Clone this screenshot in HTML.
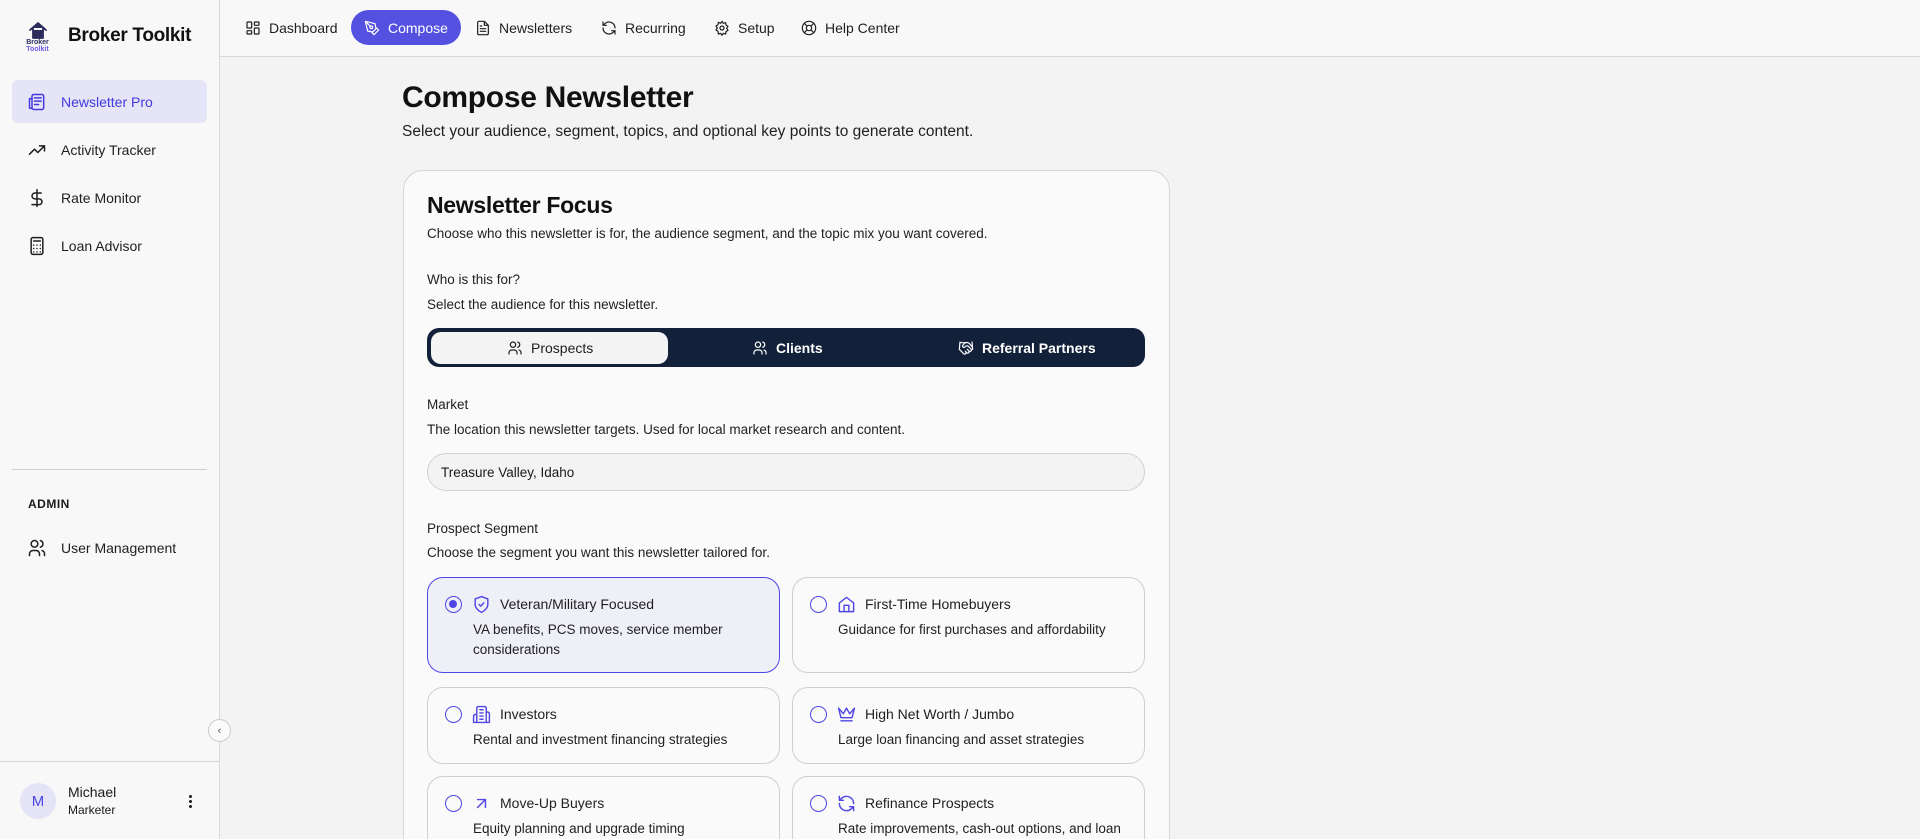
<!DOCTYPE html>
<html><head><meta charset="utf-8"><style>
*{box-sizing:border-box;margin:0;padding:0}
html{width:1920px;height:839px;overflow:hidden}
body{width:1920px;height:839px;overflow:hidden;background:#f3f3f3;font-family:"Liberation Sans",sans-serif;color:#1a1a1a;position:relative}
.abs{position:absolute}
svg{fill:none;stroke:currentColor;stroke-width:1.8;stroke-linecap:round;stroke-linejoin:round}
#side{left:0;top:0;width:220px;height:839px;background:#f8f8f8;border-right:1px solid #d9d9d9}
.nav{position:absolute;left:12px;width:195px;height:43px;border-radius:6px;display:flex;align-items:center;padding-left:15px;font-size:14px;color:#1f1f1f}
.nav svg{width:20px;height:20px;margin-right:14px}
.nav.act{background:#e5e5f7;color:#4338e0}
#top{left:220px;top:0;width:1700px;height:57px;border-bottom:1px solid #d9d9d9;background:#f8f8f8}
.tn{position:absolute;top:10px;height:35px;display:flex;align-items:center;font-size:14px;color:#1f1f1f}
.tn svg{width:16px;height:16px;margin-right:8px}
.tn.act{background:#5451e1;color:#fff;border-radius:18px;padding:0 13px}
#wrap{left:0;top:0;width:1920px;height:839px;overflow:hidden}
#card{left:403px;top:170px;width:767px;height:700px;background:#fafafa;border:1px solid #d6d6d6;border-radius:20px}
.lbl{position:absolute;left:427px;font-size:13.5px;color:#1f1f1f;white-space:nowrap}
.opt{position:absolute;width:353px;border:1px solid #cfcfcf;border-radius:16px;background:#fafafa}
.opt.sel{background:#eeeff7;border:1.5px solid #4f46e5}
.rad{position:absolute;left:17px;top:18px;width:17px;height:17px;border:1.5px solid #4f46e5;border-radius:50%}
.sel .rad::after{content:"";position:absolute;left:3px;top:3px;width:8px;height:8px;border-radius:50%;background:#4f46e5}
.opt svg{position:absolute;left:44px;top:17px;width:19px;height:19px;color:#4f46e5}
.ot{position:absolute;left:72px;top:18px;font-size:14px;color:#1f1f1f;white-space:nowrap}
.od{position:absolute;left:45px;top:42px;width:300px;font-size:13.5px;line-height:20px;color:#1f1f1f}
</style></head><body>
<div id="wrap" class="abs">
<div id="side" class="abs">
 <svg class="abs" style="left:27px;top:20px;width:22px;height:20px;stroke:#2a2d5c" viewBox="0 0 22 20"><path d="M3 10 11 3l8 7M6 8v10h10V8" fill="#2a2d5c"/></svg>
 <div class="abs" style="left:25px;top:39px;font-size:7px;font-weight:bold;color:#2a2d5c;line-height:7px;text-align:center;width:25px">Broker<br><span style="color:#6b5be6">Toolkit</span></div>
 <div class="abs" style="left:68px;top:25px;font-size:19px;font-weight:bold;color:#111;letter-spacing:-0.3px">Broker Toolkit</div>
 <div class="nav act" style="top:80px"><svg viewBox="0 0 24 24"><rect x="6" y="3" width="14" height="18" rx="2"/><path d="M6 8H3v11a2 2 0 0 0 3 0M9 7h8M9 11h8M9 15h5"/></svg>Newsletter Pro</div>
 <div class="nav" style="top:128px"><svg viewBox="0 0 24 24"><path d="M3 17l6-6 4 4 8-8M15 7h6v6"/></svg>Activity Tracker</div>
 <div class="nav" style="top:176px"><svg viewBox="0 0 24 24"><path d="M12 2v20M17 6H9.5a3.5 3.5 0 0 0 0 7h5a3.5 3.5 0 0 1 0 7H6"/></svg>Rate Monitor</div>
 <div class="nav" style="top:224px"><svg viewBox="0 0 24 24"><rect x="5" y="2" width="14" height="20" rx="2"/><path d="M8 6h8M8 11h.01M12 11h.01M16 11h.01M8 15h.01M12 15h.01M16 15h.01M8 19h.01M12 19h.01M16 19h.01"/></svg>Loan Advisor</div>
 <div class="abs" style="left:12px;top:469px;width:195px;border-top:1px solid #cfcfcf"></div>
 <div class="abs" style="left:28px;top:497px;font-size:12px;font-weight:bold;letter-spacing:.5px">ADMIN</div>
 <div class="nav" style="top:526px"><svg viewBox="0 0 24 24"><circle cx="9" cy="7" r="4"/><path d="M3 21v-2a4 4 0 0 1 4-4h4a4 4 0 0 1 4 4v2M16 3.1a4 4 0 0 1 0 7.8M21 21v-2a4 4 0 0 0-3-3.9"/></svg>User Management</div>
 <div class="abs" style="left:0;top:761px;width:220px;border-top:1px solid #d6d6d6"></div>
 <div class="abs" style="left:20px;top:783px;width:36px;height:36px;border-radius:50%;background:#e4e4f6;color:#4f46e5;font-size:15px;display:flex;align-items:center;justify-content:center">M</div>
 <div class="abs" style="left:68px;top:784px;font-size:14px">Michael</div>
 <div class="abs" style="left:68px;top:803px;font-size:12px">Marketer</div>
 <div class="abs" style="left:189px;top:794px;width:3px;height:14px;background:radial-gradient(circle,#222 1.4px,transparent 1.6px) 0 0/3px 5px"></div>
</div>
<div class="abs" style="left:208px;top:719px;width:23px;height:23px;border-radius:50%;border:1px solid #ccc;background:#fafafa;font-size:11px;color:#555;display:flex;align-items:center;justify-content:center">‹</div>
<div id="top" class="abs">
 <div class="tn" style="left:25px"><svg viewBox="0 0 24 24"><rect x="3" y="3" width="7" height="9" rx="1"/><rect x="14" y="3" width="7" height="5" rx="1"/><rect x="14" y="12" width="7" height="9" rx="1"/><rect x="3" y="16" width="7" height="5" rx="1"/></svg>Dashboard</div>
 <div class="tn act" style="left:131px"><svg viewBox="0 0 24 24"><path d="M12 19l7-7 3 3-7 7zM18 13l-1.5-7.5L2 2l3.5 14.5L13 18zM2 2l7.6 7.6"/><circle cx="11" cy="11" r="2"/></svg>Compose</div>
 <div class="tn" style="left:255px"><svg viewBox="0 0 24 24"><path d="M14 2H6a2 2 0 0 0-2 2v16a2 2 0 0 0 2 2h12a2 2 0 0 0 2-2V8zM14 2v6h6M8 13h8M8 17h8M8 9h2"/></svg>Newsletters</div>
 <div class="tn" style="left:381px"><svg viewBox="0 0 24 24"><path d="M21 12a9 9 0 0 0-15-6.7L3 8M3 3v5h5M3 12a9 9 0 0 0 15 6.7l3-2.7M21 21v-5h-5"/></svg>Recurring</div>
 <div class="tn" style="left:494px"><svg viewBox="0 0 24 24"><circle cx="12" cy="12" r="3"/><path d="M12 2l2 3 3.5-1 .5 3.5 3 2-2 3 2 3-3 2-.5 3.5-3.5-1-2 3-2-3-3.5 1L6 17l-3-2 2-3-2-3 3-2 .5-3.5L10 5z"/></svg>Setup</div>
 <div class="tn" style="left:581px"><svg viewBox="0 0 24 24"><circle cx="12" cy="12" r="10"/><circle cx="12" cy="12" r="4"/><path d="M4.9 4.9l4.3 4.3M14.8 14.8l4.3 4.3M14.8 9.2l4.3-4.3M9.2 14.8l-4.3 4.3"/></svg>Help Center</div>
</div>
<div class="abs" style="left:402px;top:81px;font-size:30px;font-weight:bold;color:#111;letter-spacing:-0.3px">Compose Newsletter</div>
<div class="abs" style="left:402px;top:123px;font-size:15.5px;color:#1f1f1f">Select your audience, segment, topics, and optional key points to generate content.</div>
<div id="card" class="abs"></div>
<div class="abs" style="left:427px;top:192px;font-size:23px;font-weight:bold;color:#111;letter-spacing:-0.3px">Newsletter Focus</div>
<div class="lbl" style="top:226px">Choose who this newsletter is for, the audience segment, and the topic mix you want covered.</div>
<div class="lbl" style="top:272px">Who is this for?</div>
<div class="lbl" style="top:297px">Select the audience for this newsletter.</div>
<div class="abs" style="left:427px;top:328px;width:718px;height:39px;background:#13203a;border-radius:12px"></div>
<div class="abs" style="left:431px;top:332px;width:237px;height:32px;background:#f4f4f4;border-radius:10px"></div>
<div class="abs" style="left:507px;top:340px;font-size:14px;color:#1f1f1f;display:flex;align-items:center"><svg viewBox="0 0 24 24" style="width:16px;height:16px;margin-right:8px"><circle cx="9" cy="7" r="4"/><path d="M3 21v-2a4 4 0 0 1 4-4h4a4 4 0 0 1 4 4v2M16 3.1a4 4 0 0 1 0 7.8M21 21v-2a4 4 0 0 0-3-3.9"/></svg>Prospects</div>
<div class="abs" style="left:752px;top:340px;font-size:14px;color:#fff;font-weight:bold;display:flex;align-items:center"><svg viewBox="0 0 24 24" style="width:16px;height:16px;margin-right:8px"><circle cx="9" cy="7" r="4"/><path d="M3 21v-2a4 4 0 0 1 4-4h4a4 4 0 0 1 4 4v2M16 3.1a4 4 0 0 1 0 7.8M21 21v-2a4 4 0 0 0-3-3.9"/></svg>Clients</div>
<div class="abs" style="left:958px;top:340px;font-size:14px;color:#fff;font-weight:bold;display:flex;align-items:center"><svg viewBox="0 0 24 24" style="width:16px;height:16px;margin-right:8px"><path d="M11 17l2 2a1 1 0 0 0 3-3M14 14l2.5 2.5a1 1 0 0 0 3-3l-3.9-3.9a3 3 0 0 0-4.2 0l-.9.9a1 1 0 0 1-3-3l2.8-2.8a5.8 5.8 0 0 1 7 .9L21 10M21 3l1 11h-2M3 3 2 14l6.5 6.5a1 1 0 0 0 3-3M3 4h8"/></svg>Referral Partners</div>
<div class="lbl" style="top:397px">Market</div>
<div class="lbl" style="top:422px">The location this newsletter targets. Used for local market research and content.</div>
<div class="abs" style="left:427px;top:453px;width:718px;height:38px;background:#f3f3f3;border:1px solid #d2d2d2;border-radius:19px;font-size:13.5px;padding:11px 13px">Treasure Valley, Idaho</div>
<div class="lbl" style="top:521px">Prospect Segment</div>
<div class="lbl" style="top:545px">Choose the segment you want this newsletter tailored for.</div>

<div class="opt sel" style="left:427px;top:577px;height:96px"><div class="rad"></div><svg viewBox="0 0 24 24"><path d="M12 22s8-4 8-10V5l-8-3-8 3v7c0 6 8 10 8 10z"/><path d="M9 12l2 2 4-4"/></svg><div class="ot">Veteran/Military Focused</div><div class="od">VA benefits, PCS moves, service member considerations</div></div>
<div class="opt" style="left:792px;top:577px;height:96px"><div class="rad"></div><svg viewBox="0 0 24 24"><path d="M3 10l9-7 9 7v11H3zM9 21v-8h6v8"/></svg><div class="ot">First-Time Homebuyers</div><div class="od">Guidance for first purchases and affordability</div></div>
<div class="opt" style="left:427px;top:687px;height:77px"><div class="rad"></div><svg viewBox="0 0 24 24"><path d="M6 22V4a2 2 0 0 1 2-2h8a2 2 0 0 1 2 2v18zM6 12H4a2 2 0 0 0-2 2v8h4M18 9h2a2 2 0 0 1 2 2v11h-4M10 6h4M10 10h4M10 14h4M10 18h4"/></svg><div class="ot">Investors</div><div class="od">Rental and investment financing strategies</div></div>
<div class="opt" style="left:792px;top:687px;height:77px"><div class="rad"></div><svg viewBox="0 0 24 24"><path d="M2 4l3 12h14l3-12-6 7-4-7-4 7zM5 20h14"/></svg><div class="ot">High Net Worth / Jumbo</div><div class="od">Large loan financing and asset strategies</div></div>
<div class="opt" style="left:427px;top:776px;height:90px"><div class="rad"></div><svg viewBox="0 0 24 24"><path d="M7 17 17 7M7 7h10v10"/></svg><div class="ot">Move-Up Buyers</div><div class="od">Equity planning and upgrade timing</div></div>
<div class="opt" style="left:792px;top:776px;height:90px"><div class="rad"></div><svg viewBox="0 0 24 24"><path d="M21 12a9 9 0 0 0-15-6.7L3 8M3 3v5h5M3 12a9 9 0 0 0 15 6.7l3-2.7M21 21v-5h-5"/></svg><div class="ot">Refinance Prospects</div><div class="od" style="white-space:nowrap">Rate improvements, cash-out options, and loan</div></div>
</div>
</body></html>
